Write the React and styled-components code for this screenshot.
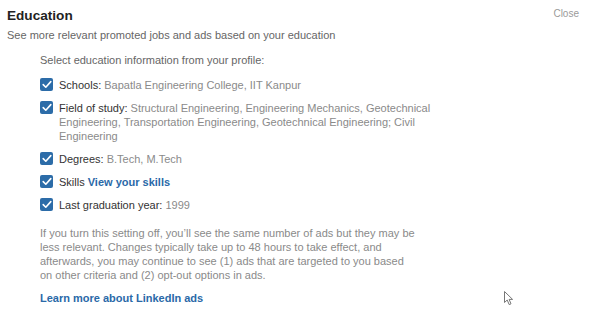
import React from "react";
import styled, { createGlobalStyle } from "styled-components";

const Global = createGlobalStyle`
  html, body { margin: 0; padding: 0; background: #fff; }
  body { font-family: "Liberation Sans", Arial, sans-serif; width: 600px; height: 316px; overflow: hidden; }
`;

const Panel = styled.div`
  position: relative;
  width: 600px;
  height: 316px;
  box-sizing: border-box;
  padding: 6px 0 0 7px;
`;

const Header = styled.div`
  display: flex;
  justify-content: space-between;
  align-items: flex-start;
`;

const Title = styled.h2`
  margin: 0;
  font-size: 13.6px;
  font-weight: 700;
  color: #222;
  line-height: 20px;
`;

const CloseBtn = styled.button`
  border: 0;
  background: none;
  padding: 0;
  margin: 1px 21px 0 0;
  font-family: inherit;
  font-size: 10px;
  color: #9a9a9a;
  line-height: 14px;
`;

const Subtitle = styled.p`
  margin: 1px 0 0;
  font-size: 11px;
  line-height: 16px;
  color: #666;
`;

const Body = styled.div`
  padding: 10px 0 0 33px;
  display: flex;
  flex-direction: column;
`;

const Prompt = styled.p`
  margin: 0 0 11px;
  font-size: 11px;
  line-height: 14px;
  color: #666;
`;

const List = styled.ul`
  list-style: none;
  margin: 0;
  padding: 0;
  display: flex;
  flex-direction: column;
  gap: 9px;
`;

const Item = styled.li`
  display: flex;
  align-items: flex-start;
  gap: 6px;
`;

const Box = styled.span`
  flex: none;
  width: 13px;
  height: 13px;
  border-radius: 2px;
  background: #2c6ca8;
  display: flex;
  align-items: center;
  justify-content: center;
`;

const ItemText = styled.span`
  width: 372px;
  font-size: 11px;
  line-height: 14px;
  color: #8a8a8a;
`;

const Label = styled.span`
  color: #333;
`;

const Link = styled.a`
  color: #2a69a8;
  font-weight: 700;
  text-decoration: none;
`;

const Note = styled.p`
  margin: 14px 0 0;
  width: 376px;
  font-size: 11px;
  line-height: 14px;
  color: #8a8a8a;
`;

const Learn = styled(Link)`
  display: block;
  margin-top: 9px;
  font-size: 11px;
  line-height: 14px;
`;

const Cursor = styled.svg`
  position: absolute;
  left: 504px;
  top: 291px;
`;

const Check = () => (
  <Box>
    <svg width="10" height="9" viewBox="0 0 10 9">
      <path d="M1.2 4.6 L3.8 7.2 L8.8 1.6" fill="none" stroke="#fff" strokeWidth="1.6" strokeLinecap="round" strokeLinejoin="round" />
    </svg>
  </Box>
);

const items = [
  { label: "Schools:", value: " Bapatla Engineering College, IIT Kanpur" },
  {
    label: "Field of study:",
    value:
      " Structural Engineering, Engineering Mechanics, Geotechnical Engineering, Transportation Engineering, Geotechnical Engineering; Civil Engineering",
  },
  { label: "Degrees:", value: " B.Tech, M.Tech" },
  { label: "Skills", link: "View your skills" },
  { label: "Last graduation year:", value: " 1999" },
];

export default function App() {
  return (
    <>
      <Global />
      <Panel>
        <Header>
          <Title>Education</Title>
          <CloseBtn>Close</CloseBtn>
        </Header>
        <Subtitle>See more relevant promoted jobs and ads based on your education</Subtitle>
        <Body>
          <Prompt>Select education information from your profile:</Prompt>
          <List>
            {items.map((it) => (
              <Item key={it.label}>
                <Check />
                <ItemText>
                  <Label>{it.label}</Label>
                  {it.value}
                  {it.link && (
                    <>
                      {" "}
                      <Link href="#">{it.link}</Link>
                    </>
                  )}
                </ItemText>
              </Item>
            ))}
          </List>
          <Note>
            If you turn this setting off, you’ll see the same number of ads but they may be less relevant. Changes
            typically take up to 48 hours to take effect, and afterwards, you may continue to see (1) ads that are
            targeted to you based on other criteria and (2) opt-out options in ads.
          </Note>
          <Learn href="#">Learn more about LinkedIn ads</Learn>
        </Body>
        <Cursor width="11" height="15" viewBox="0 0 11 15">
          <path d="M0.5 0.5 L0.5 11.5 L3.2 9 L5.2 13.6 L7 12.8 L5.1 8.4 L8.6 8.4 Z" fill="#fff" stroke="#777" strokeWidth="1" strokeLinejoin="round" />
        </Cursor>
      </Panel>
    </>
  );
}
